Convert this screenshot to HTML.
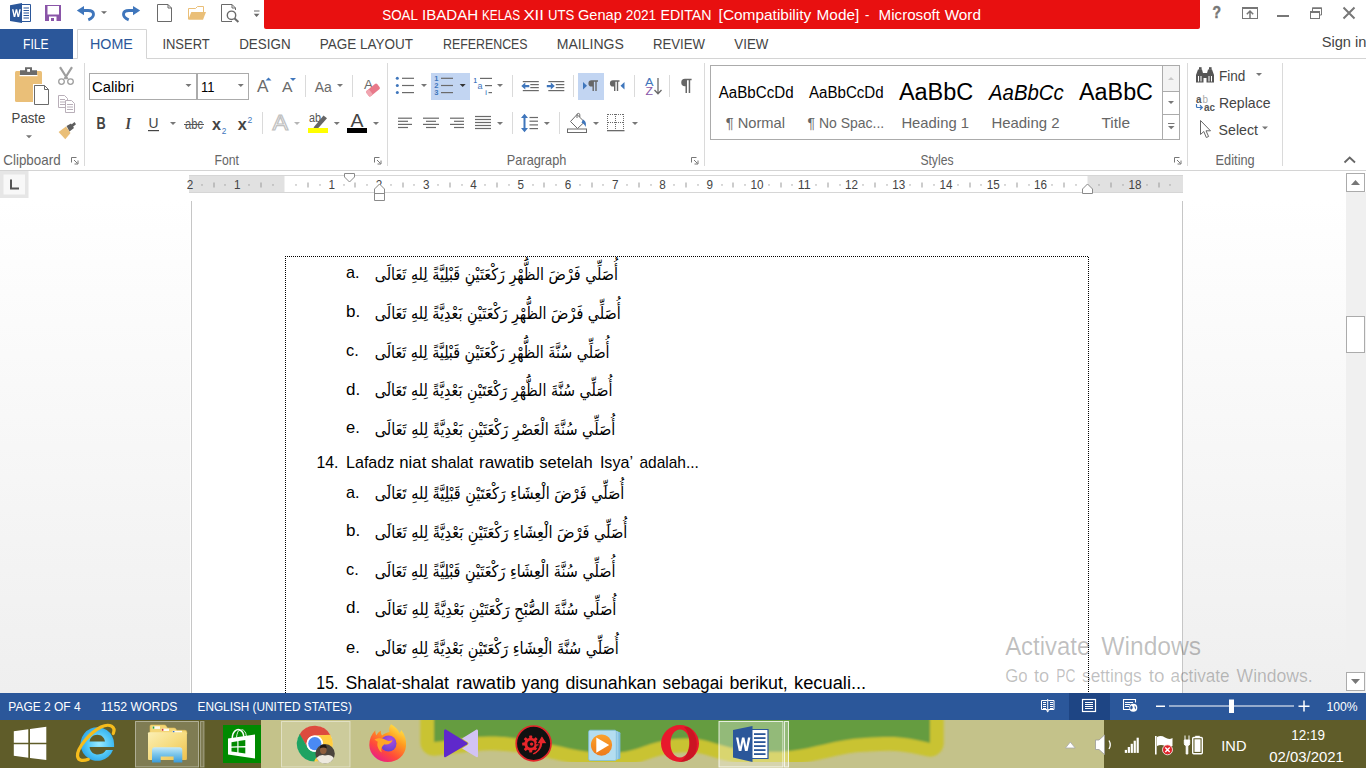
<!DOCTYPE html>
<html><head><meta charset="utf-8"><title>Word</title>
<style>
html,body{margin:0;padding:0;background:#fff;overflow:hidden}
#app{position:relative;width:1366px;height:768px;overflow:hidden;font-family:"Liberation Sans", "DejaVu Sans", sans-serif}
svg text{font-family:"Liberation Sans", "DejaVu Sans", sans-serif;white-space:pre}
</style></head><body><div id="app">
<svg width="1366" height="768" viewBox="0 0 1366 768" style="position:absolute;left:0;top:0">
<rect x="0" y="0" width="1366" height="768" fill="#fff" />
<path d="M264 0H1200V27Q1200 29 1198 29H266Q264 29 264 27Z" fill="#E81010"/>
<rect x="0" y="29" width="73" height="30" fill="#2B579A" />
<path d="M73 58.5H77.5V29.5H146.5V58.5H1366" fill="none" stroke="#D4D4D4" stroke-width="1"/>
<rect x="0" y="170" width="1366" height="1" fill="#D4D4D4" />
<path d="M22 4.5H30.5V21.5H22" fill="#fff" stroke="#2B579A"/>
<rect x="23.5" y="7.5" width="5.5" height="1" fill="#2B579A" />
<rect x="23.5" y="10.0" width="5.5" height="1" fill="#2B579A" />
<rect x="23.5" y="12.5" width="5.5" height="1" fill="#2B579A" />
<rect x="23.5" y="15.0" width="5.5" height="1" fill="#2B579A" />
<rect x="23.5" y="17.5" width="5.5" height="1" fill="#2B579A" />
<path d="M10 5.2L22 3V23L10 20.9Z" fill="#2B579A"/>
<path d="M12 9.2L13.7 17H15.3L16.4 11.9L17.5 17H19.1L20.8 9.2H19.3L18.3 14.6L17.2 9.2H15.7L14.5 14.6L13.5 9.2Z" fill="#fff"/>
<path d="M45 5H61V21H45Z" fill="#8A55A8"/>
<rect x="47.5" y="6" width="11.5" height="8.5" fill="#fff" />
<rect x="49" y="16.5" width="7.5" height="4.5" fill="#fff" />
<rect x="51" y="18" width="3" height="3" fill="#8A55A8" />
<path d="M76.8 10.6L84 5.9V15.3Z" fill="#3F76BC"/><path d="M83.5 10.5H88C95 10.5 95.5 17 88.3 19.8" fill="none" stroke="#3F76BC" stroke-width="2.9"/>
<path d="M101 11.2H107L104 14Z" fill="#6A6A6A"/>
<path d="M140.2 10.6L133 5.9V15.3Z" fill="#3F76BC"/><path d="M133.5 10.5H129C122 10.5 121.5 17 128.7 19.8" fill="none" stroke="#3F76BC" stroke-width="2.9"/>
<path d="M157.5 4.5H168L171.5 8V21.5H157.5Z M168 4.5V8H171.5" fill="#fff" stroke="#6A6A6A"/>
<path d="M188.5 19V8.5H195.5L197.5 6.5H203.5V12" fill="none" stroke="#EABF78"/>
<path d="M191.3 12H206L203 19.8H188.2Z" fill="#EABF78"/>
<path d="M232 21.5H221.5V4.5H232L235.5 8V10 M232 4.5V8H235.5" fill="none" stroke="#6A6A6A"/>
<circle cx="231.5" cy="15.3" r="4.2" fill="#fff" stroke="#6A6A6A" stroke-width="1.4"/>
<path d="M234.6 18.6L238.4 22" stroke="#6A6A6A" stroke-width="2" />
<rect x="254" y="10.5" width="5.5" height="1" fill="#6A6A6A" />
<path d="M253.7 13.8H259.5L256.6 17Z" fill="#6A6A6A"/>
<text x="1212.5" y="18.4" font-size="16.5" fill="#777" textLength="8.5" lengthAdjust="spacingAndGlyphs" font-weight="bold" stroke="#777" stroke-width="0.5">?</text>
<rect x="1242.5" y="7.5" width="15" height="11" fill="none" stroke="#777"/>
<rect x="1242" y="7" width="16" height="2" fill="#777" />
<path d="M1250 18V11.5M1246.8 14.2L1250 11L1253.2 14.2" fill="none" stroke="#777" stroke-width="1.5"/>
<rect x="1277" y="15" width="12" height="2" fill="#777" />
<path d="M1312.5 11V8H1321.5V15H1319" fill="none" stroke="#777"/>
<rect x="1312" y="7.5" width="10" height="1.5" fill="#777" />
<rect x="1310.5" y="11.5" width="9" height="7" fill="#fff" stroke="#777"/>
<rect x="1310" y="11" width="10" height="2" fill="#777" />
<path d="M1343.5 7.5L1354.5 18.5M1354.5 7.5L1343.5 18.5" stroke="#777" stroke-width="2"/>
<text x="382.2" y="20" font-size="15.3" fill="#fff" textLength="35.8" lengthAdjust="spacingAndGlyphs" >SOAL</text>
<text x="422" y="20" font-size="15.3" fill="#fff" textLength="56.2" lengthAdjust="spacingAndGlyphs" >IBADAH</text>
<text x="482" y="20" font-size="15.3" fill="#fff" textLength="38" lengthAdjust="spacingAndGlyphs" >KELAS</text>
<text x="523.4" y="20" font-size="15.3" fill="#fff" textLength="20.4" lengthAdjust="spacingAndGlyphs" >XII</text>
<text x="548" y="20" font-size="15.3" fill="#fff" textLength="26.3" lengthAdjust="spacingAndGlyphs" >UTS</text>
<text x="578" y="20" font-size="15.3" fill="#fff" textLength="43.8" lengthAdjust="spacingAndGlyphs" >Genap</text>
<text x="625.8" y="20" font-size="15.3" fill="#fff" textLength="30.4" lengthAdjust="spacingAndGlyphs" >2021</text>
<text x="660.5" y="20" font-size="15.3" fill="#fff" textLength="51.1" lengthAdjust="spacingAndGlyphs" >EDITAN</text>
<text x="718.6" y="20" font-size="15.3" fill="#fff" textLength="92.6" lengthAdjust="spacingAndGlyphs" >[Compatibility</text>
<text x="816.6" y="20" font-size="15.3" fill="#fff" textLength="42.6" lengthAdjust="spacingAndGlyphs" >Mode]</text>
<text x="865" y="20" font-size="15.3" fill="#fff" textLength="4.3" lengthAdjust="spacingAndGlyphs" >-</text>
<text x="878.6" y="20" font-size="15.3" fill="#fff" textLength="61.4" lengthAdjust="spacingAndGlyphs" >Microsoft</text>
<text x="944.7" y="20" font-size="15.3" fill="#fff" textLength="36.3" lengthAdjust="spacingAndGlyphs" >Word</text>
<text x="23" y="48.9" font-size="15.5" fill="#fff" textLength="25.6" lengthAdjust="spacingAndGlyphs" >FILE</text>
<text x="90" y="48.9" font-size="15.5" fill="#2B579A" textLength="42.8" lengthAdjust="spacingAndGlyphs" >HOME</text>
<text x="162.4" y="48.9" font-size="15.5" fill="#444" textLength="47.3" lengthAdjust="spacingAndGlyphs" >INSERT</text>
<text x="239.2" y="48.9" font-size="15.5" fill="#444" textLength="51.4" lengthAdjust="spacingAndGlyphs" >DESIGN</text>
<text x="319.8" y="48.9" font-size="15.5" fill="#444" textLength="93.2" lengthAdjust="spacingAndGlyphs" >PAGE LAYOUT</text>
<text x="443" y="48.9" font-size="15.5" fill="#444" textLength="84.6" lengthAdjust="spacingAndGlyphs" >REFERENCES</text>
<text x="556.8" y="48.9" font-size="15.5" fill="#444" textLength="67.1" lengthAdjust="spacingAndGlyphs" >MAILINGS</text>
<text x="653" y="48.9" font-size="15.5" fill="#444" textLength="52" lengthAdjust="spacingAndGlyphs" >REVIEW</text>
<text x="734.3" y="48.9" font-size="15.5" fill="#444" textLength="34.1" lengthAdjust="spacingAndGlyphs" >VIEW</text>
<text x="1321.7" y="47" font-size="15.5" fill="#444" textLength="44.8" lengthAdjust="spacingAndGlyphs" >Sign in</text>
<rect x="84.0" y="63" width="1" height="103" fill="#DADADA" />
<rect x="387.0" y="63" width="1" height="103" fill="#DADADA" />
<rect x="704.0" y="63" width="1" height="103" fill="#DADADA" />
<rect x="1187.0" y="63" width="1" height="103" fill="#DADADA" />
<rect x="1282.0" y="63" width="1" height="103" fill="#DADADA" />
<text x="3.3" y="165" font-size="14.5" fill="#666" textLength="57.3" lengthAdjust="spacingAndGlyphs" >Clipboard</text>
<text x="214.5" y="165" font-size="14.5" fill="#666" textLength="24.5" lengthAdjust="spacingAndGlyphs" >Font</text>
<text x="506.8" y="165" font-size="14.5" fill="#666" textLength="59.6" lengthAdjust="spacingAndGlyphs" >Paragraph</text>
<text x="920.4" y="165" font-size="14.5" fill="#666" textLength="33.1" lengthAdjust="spacingAndGlyphs" >Styles</text>
<text x="1215.6" y="165" font-size="14.5" fill="#666" textLength="39.1" lengthAdjust="spacingAndGlyphs" >Editing</text>
<text x="11.6" y="122.6" font-size="15" fill="#444" textLength="33.7" lengthAdjust="spacingAndGlyphs" >Paste</text>
<rect x="89.5" y="73.5" width="107" height="26" fill="#fff" stroke="#ABABAB"/>
<rect x="197.5" y="73.5" width="51" height="26" fill="#fff" stroke="#ABABAB"/>
<text x="92" y="92" font-size="15.5" fill="#000" textLength="42" lengthAdjust="spacingAndGlyphs" >Calibri</text>
<text x="201" y="92" font-size="15.5" fill="#000" textLength="13.5" lengthAdjust="spacingAndGlyphs" >11</text>
<text x="1218.9" y="81" font-size="15" fill="#444" textLength="26.4" lengthAdjust="spacingAndGlyphs" >Find</text>
<text x="1218.9" y="108.2" font-size="15" fill="#444" textLength="51.6" lengthAdjust="spacingAndGlyphs" >Replace</text>
<text x="1218.6" y="134.9" font-size="15" fill="#444" textLength="39.4" lengthAdjust="spacingAndGlyphs" >Select</text>
<rect x="710.5" y="65.5" width="469" height="74" fill="#fff" stroke="#ABABAB"/>
<rect x="1162" y="66" width="1" height="73" fill="#ABABAB" />
<rect x="1163" y="66" width="16" height="25" fill="#F3F3F3" />
<rect x="1163" y="91" width="16" height="1" fill="#ABABAB" />
<rect x="1163" y="114" width="16" height="1" fill="#ABABAB" />
<text x="718.7" y="98" font-size="15.8" fill="#000" textLength="74.9" lengthAdjust="spacingAndGlyphs" >AaBbCcDd</text>
<text x="808.9" y="98" font-size="15.8" fill="#000" textLength="74.8" lengthAdjust="spacingAndGlyphs" >AaBbCcDd</text>
<text x="898.9" y="100.3" font-size="23.3" fill="#000" textLength="74.4" lengthAdjust="spacingAndGlyphs" >AaBbC</text>
<text x="989" y="99.5" font-size="22" fill="#000" textLength="74.7" lengthAdjust="spacingAndGlyphs" font-style="italic" >AaBbCc</text>
<text x="1079" y="100.3" font-size="23.3" fill="#000" textLength="74" lengthAdjust="spacingAndGlyphs" >AaBbC</text>
<text x="725.7" y="128" font-size="15" fill="#666" textLength="59.3" lengthAdjust="spacingAndGlyphs" >¶ Normal</text>
<text x="807.5" y="128" font-size="15" fill="#666" textLength="76.7" lengthAdjust="spacingAndGlyphs" >¶ No Spac...</text>
<text x="901.4" y="128" font-size="15" fill="#666" textLength="67.6" lengthAdjust="spacingAndGlyphs" >Heading 1</text>
<text x="991.4" y="128" font-size="15" fill="#666" textLength="68.1" lengthAdjust="spacingAndGlyphs" >Heading 2</text>
<text x="1101.4" y="128" font-size="15" fill="#666" textLength="28.6" lengthAdjust="spacingAndGlyphs" >Title</text>
<rect x="15" y="71" width="27" height="31" rx="1.5" fill="#EABF78"/>
<rect x="19.5" y="75" width="18" height="1.2" fill="#fff" />
<path d="M20 70.2H25V67.2H32V70.2H37V75H20Z" fill="#6A6A6A"/>
<rect x="27.2" y="69" width="2.8" height="2.8" fill="#fff" />
<path d="M34.5 85.5H44.5L48.5 89.5V104.5H34.5Z" fill="#fff" stroke="#6A6A6A" stroke-width="1"/>
<path d="M44.5 85.5V89.5H48.5" fill="none" stroke="#6A6A6A"/>
<rect x="33" y="84" width="1" height="21.5" fill="#fff" />
<rect x="33" y="84" width="10" height="1" fill="#fff" />
<path d="M26 135.2H32L29 138.2Z" fill="#777"/>
<path d="M60 67.2L67.5 79M72 67.2L64.5 79" stroke="#9E9E9E" stroke-width="2.2" fill="none"/>
<circle cx="61.5" cy="81.6" r="2.8" fill="#fff" stroke="#9E9E9E" stroke-width="1.3"/><circle cx="70.5" cy="81.6" r="2.8" fill="#fff" stroke="#9E9E9E" stroke-width="1.3"/>
<path d="M58.5 95.5H64.5L67.5 98.5V107.5H58.5Z" fill="#fff" stroke="#B9AFB9"/>
<rect x="60" y="99" width="5" height="1" fill="#B9AFB9" />
<rect x="60" y="101.5" width="5" height="1" fill="#B9AFB9" />
<rect x="60" y="104" width="5" height="1" fill="#B9AFB9" />
<path d="M65.5 100.5H71.5L74.5 103.5V112.5H65.5Z" fill="#fff" stroke="#B9AFB9"/>
<rect x="67" y="104" width="6" height="1" fill="#B9AFB9" />
<rect x="67" y="106.5" width="6" height="1" fill="#B9AFB9" />
<rect x="67" y="109" width="6" height="1" fill="#B9AFB9" />
<path d="M58.6 132L66 126.5L70.5 133L65.3 139.2Z" fill="#EABF78"/>
<path d="M66.5 126L71 123.5L74 128L69.5 131.5Z M71.5 124.5L74.5 122L76 124.2L73 126.8Z" fill="#5E5E5E"/>
<path d="M71.5 162.5V157.5H76.5" fill="none" stroke="#777"/>
<path d="M74 160L77.5 163.5M74.5 164H78V160.5" fill="none" stroke="#777"/>
<path d="M374.5 162.5V157.5H379.5" fill="none" stroke="#777"/>
<path d="M377 160L380.5 163.5M377.5 164H381V160.5" fill="none" stroke="#777"/>
<path d="M691.5 162.5V157.5H696.5" fill="none" stroke="#777"/>
<path d="M694 160L697.5 163.5M694.5 164H698V160.5" fill="none" stroke="#777"/>
<path d="M1174.5 162.5V157.5H1179.5" fill="none" stroke="#777"/>
<path d="M1177 160L1180.5 163.5M1177.5 164H1181V160.5" fill="none" stroke="#777"/>
<path d="M185.5 84H191.5L188.5 87Z" fill="#777"/>
<path d="M237.8 84H243.8L240.8 87Z" fill="#777"/>
<text x="257" y="92" font-size="16.8" fill="#6A6A6A" textLength="11.5" lengthAdjust="spacingAndGlyphs" >A</text>
<path d="M265.5 80.5L268.5 77.5L271.5 80.5Z" fill="#3F76BC"/>
<text x="282" y="92" font-size="15.5" fill="#6A6A6A" textLength="10.5" lengthAdjust="spacingAndGlyphs" >A</text>
<path d="M290 78H296L293 81Z" fill="#3F76BC"/>
<rect x="305" y="75" width="1" height="22" fill="#DADADA" />
<rect x="352" y="75" width="1" height="22" fill="#DADADA" />
<text x="314.7" y="92" font-size="15.5" fill="#6A6A6A" textLength="17.1" lengthAdjust="spacingAndGlyphs" >Aa</text>
<path d="M337 84H343L340 87Z" fill="#777"/>
<text x="364" y="89" font-size="13.5" fill="#6A6A6A" textLength="9" lengthAdjust="spacingAndGlyphs" >A</text>
<g transform="rotate(-40 373 90)"><rect x="366" y="86.6" width="14" height="6.8" rx="1.6" fill="#E8798A"/><rect x="366" y="86.6" width="4.2" height="6.8" rx="1.2" fill="#F0A5B0"/></g>
<text x="96.5" y="128.5" font-size="16" fill="#444" textLength="9.2" lengthAdjust="spacingAndGlyphs" font-weight="bold" >B</text>
<text x="125.5" y="128.5" font-size="16" fill="#444" textLength="5.5" lengthAdjust="spacingAndGlyphs" font-weight="bold" font-style="italic" style='font-family:"Liberation Serif", "DejaVu Serif", serif' >I</text>
<text x="148.5" y="128" font-size="15.5" fill="#444" textLength="10.0" lengthAdjust="spacingAndGlyphs" >U</text>
<rect x="148" y="130" width="11" height="1.2" fill="#444" />
<path d="M170 122H176L173 125Z" fill="#777"/>
<text x="185" y="128.5" font-size="14" fill="#555" textLength="18" lengthAdjust="spacingAndGlyphs" >abc</text>
<rect x="184" y="124" width="20" height="1" fill="#555" />
<text x="212" y="130" font-size="16.5" fill="#444" textLength="9" lengthAdjust="spacingAndGlyphs" font-weight="bold" >x</text>
<text x="221.8" y="133.5" font-size="9" fill="#3F76BC" textLength="4.6" lengthAdjust="spacingAndGlyphs" >2</text>
<text x="237.8" y="130" font-size="16.5" fill="#444" textLength="9.0" lengthAdjust="spacingAndGlyphs" font-weight="bold" >x</text>
<text x="247.6" y="123" font-size="9" fill="#3F76BC" textLength="4.8" lengthAdjust="spacingAndGlyphs" >2</text>
<rect x="262" y="112" width="1" height="22" fill="#DADADA" />
<text x="272.4" y="130" font-size="22" fill="#fff" stroke="#C0C0C0" stroke-width="1.2" textLength="15.6" lengthAdjust="spacingAndGlyphs">A</text>
<path d="M294 122H300L297 125Z" fill="#B5B5B5"/>
<text x="309" y="121.5" font-size="12" fill="#555" textLength="12" lengthAdjust="spacingAndGlyphs" >ab</text>
<path d="M313.5 127.5L323.5 115.5L327 118.2L317 129.5Z" fill="#666"/>
<rect x="308" y="128" width="20" height="5" fill="#FFFF00" />
<path d="M333.8 122H339.8L336.8 125Z" fill="#777"/>
<text x="350.5" y="126.8" font-size="17.8" fill="#444" textLength="13.0" lengthAdjust="spacingAndGlyphs" >A</text>
<rect x="347" y="128" width="20" height="5" fill="#000" />
<path d="M373 122H379L376 125Z" fill="#777"/>
<circle cx="397.3" cy="78.3" r="1.5" fill="#3F76BC"/>
<rect x="402" y="77.7" width="12" height="1.2" fill="#6A6A6A" />
<circle cx="397.3" cy="85.5" r="1.5" fill="#3F76BC"/>
<rect x="402" y="84.9" width="12" height="1.2" fill="#6A6A6A" />
<circle cx="397.3" cy="92.6" r="1.5" fill="#3F76BC"/>
<rect x="402" y="92.0" width="12" height="1.2" fill="#6A6A6A" />
<path d="M421 84H427L424 87Z" fill="#777"/>
<rect x="431" y="73" width="39" height="27" fill="#C2D5F2" />
<text x="434.3" y="80.89999999999999" font-size="7.5" fill="#3F76BC" textLength="4.2" lengthAdjust="spacingAndGlyphs" font-weight="bold" >1</text>
<rect x="441" y="77.7" width="12" height="1.2" fill="#6A6A6A" />
<text x="434.3" y="88.1" font-size="7.5" fill="#3F76BC" textLength="4.2" lengthAdjust="spacingAndGlyphs" font-weight="bold" >2</text>
<rect x="441" y="84.9" width="12" height="1.2" fill="#6A6A6A" />
<text x="434.3" y="95.19999999999999" font-size="7.5" fill="#3F76BC" textLength="4.2" lengthAdjust="spacingAndGlyphs" font-weight="bold" >3</text>
<rect x="441" y="92.0" width="12" height="1.2" fill="#6A6A6A" />
<path d="M459.7 84H465.7L462.7 87Z" fill="#333"/>
<text x="473.6" y="82.5" font-size="8" fill="#3F76BC" textLength="3.4" lengthAdjust="spacingAndGlyphs" font-weight="bold" >1</text>
<rect x="480" y="77.8" width="12" height="1.2" fill="#6A6A6A" />
<text x="477.5" y="88.5" font-size="9" fill="#3F76BC" textLength="5.0" lengthAdjust="spacingAndGlyphs" >a</text>
<rect x="485" y="85" width="7" height="1.2" fill="#6A6A6A" />
<text x="485.2" y="95" font-size="8" fill="#3F76BC" textLength="1.6" lengthAdjust="spacingAndGlyphs" font-weight="bold" >i</text>
<rect x="488.5" y="92" width="3.5" height="1.2" fill="#6A6A6A" />
<path d="M497 84H503L500 87Z" fill="#777"/>
<rect x="512" y="75" width="1" height="22" fill="#DADADA" />
<rect x="573" y="75" width="1" height="22" fill="#DADADA" />
<rect x="634" y="75" width="1" height="22" fill="#DADADA" />
<rect x="669" y="75" width="1" height="22" fill="#DADADA" />
<rect x="522.8" y="81" width="16" height="1.2" fill="#6A6A6A" />
<rect x="522.8" y="90" width="16" height="1.2" fill="#6A6A6A" />
<rect x="530.3" y="84" width="8.5" height="1.2" fill="#6A6A6A" />
<rect x="530.3" y="87" width="8.5" height="1.2" fill="#6A6A6A" />
<path d="M521.3 86.1L525.3 82.6V84.9H529.3V87.3H525.3V89.6Z" fill="#3F76BC"/>
<rect x="548.3" y="81" width="16" height="1.2" fill="#6A6A6A" />
<rect x="548.3" y="90" width="16" height="1.2" fill="#6A6A6A" />
<rect x="555.8" y="84" width="8.5" height="1.2" fill="#6A6A6A" />
<rect x="555.8" y="87" width="8.5" height="1.2" fill="#6A6A6A" />
<path d="M554.8 86.1L550.8 82.6V84.9H546.8V87.3H550.8V89.6Z" fill="#3F76BC"/>
<rect x="578" y="73" width="26" height="27" fill="#C2D5F2" />
<path d="M583 82L587 85.7L583 89.4Z" fill="#3F76BC"/>
<path d="M591.5 80.3H598.0V81.7H596.7V91.0H595.3V81.7H593.9V91.0H592.5V86.5H591.5A3.1 3.1 0 0 1 591.5 80.3Z" fill="#666"/>
<path d="M613 80.3H619.5V81.7H618.2V91.0H616.8V81.7H615.4V91.0H614V86.5H613A3.1 3.1 0 0 1 613 80.3Z" fill="#666"/>
<path d="M624.5 82L620.5 85.7L624.5 89.4Z" fill="#3F76BC"/>
<text x="645" y="85.5" font-size="11.5" fill="#3F76BC" textLength="8.5" lengthAdjust="spacingAndGlyphs" >A</text>
<text x="645.5" y="95" font-size="11" fill="#8A55A8" textLength="7.5" lengthAdjust="spacingAndGlyphs" >Z</text>
<path d="M658 78V93.5M654.5 90L658 93.8L661.5 90" fill="none" stroke="#6A6A6A" stroke-width="1.3"/>
<path d="M685 78.8H691.6V80.3H690.2V93H688.7V80.3H687V93H685.5V86.3H685A3.75 3.75 0 0 1 685 78.8Z" fill="#666"/>
<rect x="398" y="117.60000000000001" width="14" height="1.2" fill="#6A6A6A" />
<rect x="398" y="120.7" width="10" height="1.2" fill="#6A6A6A" />
<rect x="398" y="123.80000000000001" width="14" height="1.2" fill="#6A6A6A" />
<rect x="398" y="126.9" width="10" height="1.2" fill="#6A6A6A" />
<rect x="423.0" y="117.60000000000001" width="16" height="1.2" fill="#6A6A6A" />
<rect x="426.0" y="120.7" width="10" height="1.2" fill="#6A6A6A" />
<rect x="423.0" y="123.80000000000001" width="16" height="1.2" fill="#6A6A6A" />
<rect x="426.0" y="126.9" width="10" height="1.2" fill="#6A6A6A" />
<rect x="450" y="117.60000000000001" width="14" height="1.2" fill="#6A6A6A" />
<rect x="454" y="120.7" width="10" height="1.2" fill="#6A6A6A" />
<rect x="450" y="123.80000000000001" width="14" height="1.2" fill="#6A6A6A" />
<rect x="454" y="126.9" width="10" height="1.2" fill="#6A6A6A" />
<rect x="475" y="115.9" width="16" height="1.2" fill="#6A6A6A" />
<rect x="475" y="118.9" width="16" height="1.2" fill="#6A6A6A" />
<rect x="475" y="121.9" width="16" height="1.2" fill="#6A6A6A" />
<rect x="475" y="124.9" width="16" height="1.2" fill="#6A6A6A" />
<rect x="475" y="127.9" width="16" height="1.2" fill="#6A6A6A" />
<path d="M497 122H503L500 125Z" fill="#777"/>
<rect x="512" y="112" width="1" height="22" fill="#DADADA" />
<rect x="559" y="112" width="1" height="22" fill="#DADADA" />
<path d="M524.5 113.7L521 118H523.5V128H521L524.5 132.2L528 128H525.5V118H528Z" fill="#3F76BC"/>
<rect x="529.5" y="116.9" width="8.5" height="1.2" fill="#6A6A6A" />
<rect x="529.5" y="120.60000000000001" width="8.5" height="1.2" fill="#6A6A6A" />
<rect x="529.5" y="124.30000000000001" width="8.5" height="1.2" fill="#6A6A6A" />
<rect x="529.5" y="128.0" width="8.5" height="1.2" fill="#6A6A6A" />
<path d="M543.9 122H549.9L546.9 125Z" fill="#777"/>
<rect x="567.5" y="129" width="19" height="3.5" fill="#fff" stroke="#6A6A6A"/>
<path d="M577 114.5L584.5 122L577.5 128.5L570.5 121.5Z" fill="#fff" stroke="#6A6A6A"/>
<path d="M577 118V114.8A1.4 1.4 0 0 1 579.8 114.8V117" fill="none" stroke="#6A6A6A"/>
<path d="M583 119.5C586 121 586.5 124 585.5 127C584.5 124.5 583.5 123.5 581.5 122.8Z" fill="#3F76BC"/>
<path d="M593 122H599L596 125Z" fill="#777"/>
<path d="M607.5 114V130M615.5 114V130M623.5 114V130M607.5 114.5H624M607.5 122.5H624" fill="none" stroke="#6A6A6A" stroke-dasharray="1 1" shape-rendering="crispEdges"/>
<rect x="607" y="130" width="17.5" height="1.3" fill="#6A6A6A" />
<path d="M632 122H638L635 125Z" fill="#777"/>
<path d="M1168 80L1171 77L1174 80Z" fill="#C8C8C8"/>
<path d="M1168 101H1174L1171 104Z" fill="#777"/>
<rect x="1168" y="123" width="6.5" height="1" fill="#777" />
<path d="M1168 126H1174.5L1171.2 129.3Z" fill="#777"/>
<path d="M1196 82.5V75L1198 69.5H1202L1203.5 75V82.5Z M1206.5 82.5V75L1208 69.5H1212L1214 75V82.5Z" fill="#555"/>
<rect x="1199" y="67.2" width="2.6" height="2.6" fill="#555" />
<rect x="1209" y="67.2" width="2.6" height="2.6" fill="#555" />
<rect x="1203" y="73" width="4" height="5" fill="#555" />
<rect x="1198" y="76" width="1" height="5.5" fill="#fff" />
<rect x="1200.5" y="76" width="1" height="5.5" fill="#fff" />
<rect x="1208.5" y="76" width="1" height="5.5" fill="#fff" />
<rect x="1211" y="76" width="1" height="5.5" fill="#fff" />
<path d="M1256 73H1262L1259 76Z" fill="#777"/>
<text x="1196" y="102.5" font-size="10.5" fill="#555" textLength="5.5" lengthAdjust="spacingAndGlyphs" font-weight="bold" >a</text>
<text x="1202.5" y="102.5" font-size="10.5" fill="#AAA" textLength="5.5" lengthAdjust="spacingAndGlyphs" >b</text>
<text x="1204" y="110.5" font-size="10.5" fill="#555" textLength="11" lengthAdjust="spacingAndGlyphs" font-weight="bold" >ac</text>
<path d="M1196.5 104V106.5Q1196.5 107.5 1197.5 107.5H1202M1200 105.3L1202.3 107.5L1200 109.7" fill="none" stroke="#3F76BC" stroke-width="1.2"/>
<path d="M1200.5 120.5V134.5L1203.8 131.5L1206.3 137.5L1208.6 136.5L1206 130.8H1210.5Z" fill="#fff" stroke="#666" stroke-width="1"/>
<path d="M1262 126.5H1268L1265 129.5Z" fill="#777"/>
<path d="M1344.5 162.5L1349.7 157.5L1355 162.5" fill="none" stroke="#666" stroke-width="1.8"/>
<defs><linearGradient id="bgg" x1="0" y1="0" x2="0" y2="1"><stop offset="0" stop-color="#ffffff"/><stop offset="1" stop-color="#EFEFEF"/></linearGradient></defs>
<rect x="0" y="200" width="1346" height="493" fill="url(#bgg)" />
<rect x="0" y="171" width="28.5" height="27" fill="#E6E6E6" />
<rect x="3.5" y="174.5" width="21.5" height="20" fill="#F8F8F8" />
<path d="M11 179.5V188.5H19" fill="none" stroke="#555" stroke-width="2"/>
<rect x="189" y="175" width="994" height="18" fill="#E1E1E1" />
<rect x="284.5" y="175" width="803" height="18" fill="#fff" />
<rect x="189" y="175" width="994" height="1" fill="#D6D6D6" />
<rect x="189" y="192" width="994" height="1" fill="#D6D6D6" />
<text x="186.8" y="188.5" font-size="12.5" fill="#444" textLength="6.5" lengthAdjust="spacingAndGlyphs" >2</text>
<rect x="201.5" y="184.2" width="1" height="1.5" fill="#9A9A9A" />
<rect x="213.5" y="182.5" width="1" height="5" fill="#9A9A9A" />
<rect x="224.5" y="184.2" width="1" height="1.5" fill="#9A9A9A" />
<text x="234.0" y="188.5" font-size="12.5" fill="#444" textLength="6.5" lengthAdjust="spacingAndGlyphs" >1</text>
<rect x="248.5" y="184.2" width="1" height="1.5" fill="#9A9A9A" />
<rect x="260.5" y="182.5" width="1" height="5" fill="#9A9A9A" />
<rect x="272.5" y="184.2" width="1" height="1.5" fill="#9A9A9A" />
<rect x="295.5" y="184.2" width="1" height="1.5" fill="#9A9A9A" />
<rect x="307.5" y="182.5" width="1" height="5" fill="#9A9A9A" />
<rect x="319.5" y="184.2" width="1" height="1.5" fill="#9A9A9A" />
<text x="328.5" y="188.5" font-size="12.5" fill="#444" textLength="6.5" lengthAdjust="spacingAndGlyphs" >1</text>
<rect x="343.5" y="184.2" width="1" height="1.5" fill="#9A9A9A" />
<rect x="354.5" y="182.5" width="1" height="5" fill="#9A9A9A" />
<rect x="366.5" y="184.2" width="1" height="1.5" fill="#9A9A9A" />
<text x="375.7" y="188.5" font-size="12.5" fill="#444" textLength="6.5" lengthAdjust="spacingAndGlyphs" >2</text>
<rect x="390.5" y="184.2" width="1" height="1.5" fill="#9A9A9A" />
<rect x="402.5" y="182.5" width="1" height="5" fill="#9A9A9A" />
<rect x="413.5" y="184.2" width="1" height="1.5" fill="#9A9A9A" />
<text x="423.0" y="188.5" font-size="12.5" fill="#444" textLength="6.5" lengthAdjust="spacingAndGlyphs" >3</text>
<rect x="437.5" y="184.2" width="1" height="1.5" fill="#9A9A9A" />
<rect x="449.5" y="182.5" width="1" height="5" fill="#9A9A9A" />
<rect x="461.5" y="184.2" width="1" height="1.5" fill="#9A9A9A" />
<text x="470.2" y="188.5" font-size="12.5" fill="#444" textLength="6.5" lengthAdjust="spacingAndGlyphs" >4</text>
<rect x="484.5" y="184.2" width="1" height="1.5" fill="#9A9A9A" />
<rect x="496.5" y="182.5" width="1" height="5" fill="#9A9A9A" />
<rect x="508.5" y="184.2" width="1" height="1.5" fill="#9A9A9A" />
<text x="517.5" y="188.5" font-size="12.5" fill="#444" textLength="6.5" lengthAdjust="spacingAndGlyphs" >5</text>
<rect x="532.5" y="184.2" width="1" height="1.5" fill="#9A9A9A" />
<rect x="543.5" y="182.5" width="1" height="5" fill="#9A9A9A" />
<rect x="555.5" y="184.2" width="1" height="1.5" fill="#9A9A9A" />
<text x="564.7" y="188.5" font-size="12.5" fill="#444" textLength="6.5" lengthAdjust="spacingAndGlyphs" >6</text>
<rect x="579.5" y="184.2" width="1" height="1.5" fill="#9A9A9A" />
<rect x="591.5" y="182.5" width="1" height="5" fill="#9A9A9A" />
<rect x="602.5" y="184.2" width="1" height="1.5" fill="#9A9A9A" />
<text x="612.0" y="188.5" font-size="12.5" fill="#444" textLength="6.5" lengthAdjust="spacingAndGlyphs" >7</text>
<rect x="626.5" y="184.2" width="1" height="1.5" fill="#9A9A9A" />
<rect x="638.5" y="182.5" width="1" height="5" fill="#9A9A9A" />
<rect x="650.5" y="184.2" width="1" height="1.5" fill="#9A9A9A" />
<text x="659.2" y="188.5" font-size="12.5" fill="#444" textLength="6.5" lengthAdjust="spacingAndGlyphs" >8</text>
<rect x="673.5" y="184.2" width="1" height="1.5" fill="#9A9A9A" />
<rect x="685.5" y="182.5" width="1" height="5" fill="#9A9A9A" />
<rect x="697.5" y="184.2" width="1" height="1.5" fill="#9A9A9A" />
<text x="706.4" y="188.5" font-size="12.5" fill="#444" textLength="6.5" lengthAdjust="spacingAndGlyphs" >9</text>
<rect x="721.5" y="184.2" width="1" height="1.5" fill="#9A9A9A" />
<rect x="732.5" y="182.5" width="1" height="5" fill="#9A9A9A" />
<rect x="744.5" y="184.2" width="1" height="1.5" fill="#9A9A9A" />
<text x="750.4" y="188.5" font-size="12.5" fill="#444" textLength="13.0" lengthAdjust="spacingAndGlyphs" >10</text>
<rect x="768.5" y="184.2" width="1" height="1.5" fill="#9A9A9A" />
<rect x="780.5" y="182.5" width="1" height="5" fill="#9A9A9A" />
<rect x="791.5" y="184.2" width="1" height="1.5" fill="#9A9A9A" />
<text x="797.7" y="188.5" font-size="12.5" fill="#444" textLength="13.0" lengthAdjust="spacingAndGlyphs" >11</text>
<rect x="815.5" y="184.2" width="1" height="1.5" fill="#9A9A9A" />
<rect x="827.5" y="182.5" width="1" height="5" fill="#9A9A9A" />
<rect x="839.5" y="184.2" width="1" height="1.5" fill="#9A9A9A" />
<text x="844.9" y="188.5" font-size="12.5" fill="#444" textLength="13.0" lengthAdjust="spacingAndGlyphs" >12</text>
<rect x="862.5" y="184.2" width="1" height="1.5" fill="#9A9A9A" />
<rect x="874.5" y="182.5" width="1" height="5" fill="#9A9A9A" />
<rect x="886.5" y="184.2" width="1" height="1.5" fill="#9A9A9A" />
<text x="892.2" y="188.5" font-size="12.5" fill="#444" textLength="13.0" lengthAdjust="spacingAndGlyphs" >13</text>
<rect x="909.5" y="184.2" width="1" height="1.5" fill="#9A9A9A" />
<rect x="921.5" y="182.5" width="1" height="5" fill="#9A9A9A" />
<rect x="933.5" y="184.2" width="1" height="1.5" fill="#9A9A9A" />
<text x="939.4" y="188.5" font-size="12.5" fill="#444" textLength="13.0" lengthAdjust="spacingAndGlyphs" >14</text>
<rect x="957.5" y="184.2" width="1" height="1.5" fill="#9A9A9A" />
<rect x="969.5" y="182.5" width="1" height="5" fill="#9A9A9A" />
<rect x="980.5" y="184.2" width="1" height="1.5" fill="#9A9A9A" />
<text x="986.7" y="188.5" font-size="12.5" fill="#444" textLength="13.0" lengthAdjust="spacingAndGlyphs" >15</text>
<rect x="1004.5" y="184.2" width="1" height="1.5" fill="#9A9A9A" />
<rect x="1016.5" y="182.5" width="1" height="5" fill="#9A9A9A" />
<rect x="1028.5" y="184.2" width="1" height="1.5" fill="#9A9A9A" />
<text x="1033.9" y="188.5" font-size="12.5" fill="#444" textLength="13.0" lengthAdjust="spacingAndGlyphs" >16</text>
<rect x="1051.5" y="184.2" width="1" height="1.5" fill="#9A9A9A" />
<rect x="1063.5" y="182.5" width="1" height="5" fill="#9A9A9A" />
<rect x="1075.5" y="184.2" width="1" height="1.5" fill="#9A9A9A" />
<rect x="1098.5" y="184.2" width="1" height="1.5" fill="#9A9A9A" />
<rect x="1110.5" y="182.5" width="1" height="5" fill="#9A9A9A" />
<rect x="1122.5" y="184.2" width="1" height="1.5" fill="#9A9A9A" />
<text x="1128.4" y="188.5" font-size="12.5" fill="#444" textLength="13.0" lengthAdjust="spacingAndGlyphs" >18</text>
<rect x="1146.5" y="184.2" width="1" height="1.5" fill="#9A9A9A" />
<rect x="1158.5" y="182.5" width="1" height="5" fill="#9A9A9A" />
<rect x="1169.5" y="184.2" width="1" height="1.5" fill="#9A9A9A" />
<rect x="190" y="200" width="993" height="493" fill="#fff" />
<rect x="191" y="201" width="1" height="492" fill="#C6C6C6" />
<rect x="1182" y="201" width="1" height="492" fill="#C6C6C6" />
<path d="M285.5 693V256.5H1088.5V693" fill="none" stroke="#000" stroke-width="1" stroke-dasharray="1 1" shape-rendering="crispEdges"/>
<path d="M344.5 173.5H354.5V177L349.5 182L344.5 177Z" fill="#fff" stroke="#8A8A8A"/>
<path d="M374.5 200.5V189L379.5 184L384.5 189V200.5ZM374.5 193.5H384.5" fill="#fff" stroke="#8A8A8A"/>
<path d="M1082.5 193.5V189L1087.5 184L1092.5 189V193.5Z" fill="#fff" stroke="#8A8A8A"/>
<rect x="1346" y="171" width="20" height="522" fill="#F0F0F0" />
<rect x="1346" y="171" width="20" height="21" fill="#fff" />
<rect x="1346.5" y="173.5" width="18" height="18" fill="#fff" stroke="#ABABAB"/>
<path d="M1351 185L1355.5 180L1360 185Z" fill="#777"/>
<rect x="1346.5" y="672.5" width="18" height="18" fill="#fff" stroke="#ABABAB"/>
<path d="M1351 679L1355.5 684L1360 679Z" fill="#777"/>
<rect x="1346.5" y="316.5" width="18" height="36" fill="#fff" stroke="#ABABAB"/>
<text x="346" y="277.8" font-size="16.6" fill="#000" textLength="13.5" lengthAdjust="spacingAndGlyphs" >a.</text>
<text x="374.8" y="279.6" font-size="16.5" fill="#000" textLength="243.2" lengthAdjust="spacingAndGlyphs" style='font-family:"DejaVu Sans", sans-serif' >أُصَلِّي فَرْضَ الظُّهْرِ رَكْعَتَيْنِ قَبْلِيَّةً لِلهِ تَعَالَى</text>
<text x="346" y="497.5" font-size="16.6" fill="#000" textLength="13.5" lengthAdjust="spacingAndGlyphs" >a.</text>
<text x="374.8" y="499.3" font-size="16.5" fill="#000" textLength="249.4" lengthAdjust="spacingAndGlyphs" style='font-family:"DejaVu Sans", sans-serif' >أُصَلِّي فَرْضَ الْعِشَاءِ رَكْعَتَيْنِ قَبْلِيَّةً لِلهِ تَعَالَى</text>
<text x="346" y="316.8" font-size="16.6" fill="#000" textLength="14.2" lengthAdjust="spacingAndGlyphs" >b.</text>
<text x="374.8" y="318.6" font-size="16.5" fill="#000" textLength="245.9" lengthAdjust="spacingAndGlyphs" style='font-family:"DejaVu Sans", sans-serif' >أُصَلِّي فَرْضَ الظُّهْرِ رَكْعَتَيْنِ بَعْدِيَّةً لِلهِ تَعَالَى</text>
<text x="346" y="536.4" font-size="16.6" fill="#000" textLength="14.2" lengthAdjust="spacingAndGlyphs" >b.</text>
<text x="374.8" y="538.1999999999999" font-size="16.5" fill="#000" textLength="252.4" lengthAdjust="spacingAndGlyphs" style='font-family:"DejaVu Sans", sans-serif' >أُصَلِّي فَرْضَ الْعِشَاءِ رَكْعَتَيْنِ بَعْدِيَّةً لِلهِ تَعَالَى</text>
<text x="346" y="355.7" font-size="16.6" fill="#000" textLength="12.7" lengthAdjust="spacingAndGlyphs" >c.</text>
<text x="374.8" y="357.5" font-size="16.5" fill="#000" textLength="234.8" lengthAdjust="spacingAndGlyphs" style='font-family:"DejaVu Sans", sans-serif' >أُصَلِّي سُنَّةَ الظُّهْرِ رَكْعَتَيْنِ قَبْلِيَّةً لِلهِ تَعَالَى</text>
<text x="346" y="574.7" font-size="16.6" fill="#000" textLength="12.7" lengthAdjust="spacingAndGlyphs" >c.</text>
<text x="374.8" y="576.5" font-size="16.5" fill="#000" textLength="240.6" lengthAdjust="spacingAndGlyphs" style='font-family:"DejaVu Sans", sans-serif' >أُصَلِّي سُنَّةَ الْعِشَاءِ رَكْعَتَيْنِ قَبْلِيَّةً لِلهِ تَعَالَى</text>
<text x="346" y="394.6" font-size="16.6" fill="#000" textLength="14.2" lengthAdjust="spacingAndGlyphs" >d.</text>
<text x="374.8" y="396.40000000000003" font-size="16.5" fill="#000" textLength="237.6" lengthAdjust="spacingAndGlyphs" style='font-family:"DejaVu Sans", sans-serif' >أُصَلِّي سُنَّةَ الظُّهْرِ رَكْعَتَيْنِ بَعْدِيَّةً لِلهِ تَعَالَى</text>
<text x="346" y="613.3" font-size="16.6" fill="#000" textLength="14.2" lengthAdjust="spacingAndGlyphs" >d.</text>
<text x="374.8" y="615.0999999999999" font-size="16.5" fill="#000" textLength="241.6" lengthAdjust="spacingAndGlyphs" style='font-family:"DejaVu Sans", sans-serif' >أُصَلِّي سُنَّةَ الصُّبْحِ رَكْعَتَيْنِ بَعْدِيَّةً لِلهِ تَعَالَى</text>
<text x="346" y="433" font-size="16.6" fill="#000" textLength="13.8" lengthAdjust="spacingAndGlyphs" >e.</text>
<text x="374.8" y="434.8" font-size="16.5" fill="#000" textLength="240.4" lengthAdjust="spacingAndGlyphs" style='font-family:"DejaVu Sans", sans-serif' >أُصَلِّي سُنَّةَ الْعَصْرِ رَكْعَتَيْنِ بَعْدِيَّةً لِلهِ تَعَالَى</text>
<text x="346" y="652.5" font-size="16.6" fill="#000" textLength="13.8" lengthAdjust="spacingAndGlyphs" >e.</text>
<text x="374.8" y="654.3" font-size="16.5" fill="#000" textLength="244.0" lengthAdjust="spacingAndGlyphs" style='font-family:"DejaVu Sans", sans-serif' >أُصَلِّي سُنَّةَ الْعِشَاءِ رَكْعَتَيْنِ بَعْدِيَّةً لِلهِ تَعَالَى</text>
<text x="316.4" y="467.7" font-size="16.6" fill="#000" textLength="22.0" lengthAdjust="spacingAndGlyphs" >14.</text>
<text x="346" y="467.7" font-size="16.6" fill="#000" textLength="48.3" lengthAdjust="spacingAndGlyphs" >Lafadz</text>
<text x="399.3" y="467.7" font-size="16.6" fill="#000" textLength="27.0" lengthAdjust="spacingAndGlyphs" >niat</text>
<text x="431" y="467.7" font-size="16.6" fill="#000" textLength="42.1" lengthAdjust="spacingAndGlyphs" >shalat</text>
<text x="479" y="467.7" font-size="16.6" fill="#000" textLength="55" lengthAdjust="spacingAndGlyphs" >rawatib</text>
<text x="539.3" y="467.7" font-size="16.6" fill="#000" textLength="53.3" lengthAdjust="spacingAndGlyphs" >setelah</text>
<text x="599.9" y="467.7" font-size="16.6" fill="#000" textLength="33.1" lengthAdjust="spacingAndGlyphs" >Isya’</text>
<text x="639.4" y="467.7" font-size="16.6" fill="#000" textLength="59.5" lengthAdjust="spacingAndGlyphs" >adalah...</text>
<text x="316.3" y="688.7" font-size="18" fill="#000" textLength="22.1" lengthAdjust="spacingAndGlyphs" >15.</text>
<text x="345.5" y="688.7" font-size="18" fill="#000" textLength="103.5" lengthAdjust="spacingAndGlyphs" >Shalat-shalat</text>
<text x="456" y="688.7" font-size="18" fill="#000" textLength="59.7" lengthAdjust="spacingAndGlyphs" >rawatib</text>
<text x="521.6" y="688.7" font-size="18" fill="#000" textLength="37.5" lengthAdjust="spacingAndGlyphs" >yang</text>
<text x="565.4" y="688.7" font-size="18" fill="#000" textLength="90.9" lengthAdjust="spacingAndGlyphs" >disunahkan</text>
<text x="662.6" y="688.7" font-size="18" fill="#000" textLength="60.5" lengthAdjust="spacingAndGlyphs" >sebagai</text>
<text x="729.4" y="688.7" font-size="18" fill="#000" textLength="58.4" lengthAdjust="spacingAndGlyphs" >berikut,</text>
<text x="794" y="688.7" font-size="18" fill="#000" textLength="72.2" lengthAdjust="spacingAndGlyphs" >kecuali...</text>
<text x="1005.2" y="654.8" font-size="25" fill="#000" textLength="85.0" lengthAdjust="spacingAndGlyphs" fill-opacity="0.25">Activate</text>
<text x="1101.2" y="654.8" font-size="25" fill="#000" textLength="100.0" lengthAdjust="spacingAndGlyphs" fill-opacity="0.25">Windows</text>
<text x="1005.2" y="682" font-size="17.5" fill="#000" textLength="22.4" lengthAdjust="spacingAndGlyphs" fill-opacity="0.25">Go</text>
<text x="1034" y="682" font-size="17.5" fill="#000" textLength="15.2" lengthAdjust="spacingAndGlyphs" fill-opacity="0.25">to</text>
<text x="1056.2" y="682" font-size="17.5" fill="#000" textLength="19.2" lengthAdjust="spacingAndGlyphs" fill-opacity="0.25">PC</text>
<text x="1082" y="682" font-size="17.5" fill="#000" textLength="59.7" lengthAdjust="spacingAndGlyphs" fill-opacity="0.25">settings</text>
<text x="1148.7" y="682" font-size="17.5" fill="#000" textLength="15.7" lengthAdjust="spacingAndGlyphs" fill-opacity="0.25">to</text>
<text x="1170.5" y="682" font-size="17.5" fill="#000" textLength="59.1" lengthAdjust="spacingAndGlyphs" fill-opacity="0.25">activate</text>
<text x="1236.6" y="682" font-size="17.5" fill="#000" textLength="76.1" lengthAdjust="spacingAndGlyphs" fill-opacity="0.25">Windows.</text>
<rect x="0" y="693" width="1366" height="27" fill="#2B579A" />
<text x="8.3" y="711.4" font-size="13.5" fill="#fff" textLength="72.4" lengthAdjust="spacingAndGlyphs" >PAGE 2 OF 4</text>
<text x="100.7" y="711.4" font-size="13.5" fill="#fff" textLength="76.8" lengthAdjust="spacingAndGlyphs" >1152 WORDS</text>
<text x="197.5" y="711.4" font-size="13.5" fill="#fff" textLength="154.4" lengthAdjust="spacingAndGlyphs" >ENGLISH (UNITED STATES)</text>
<rect x="1069" y="693" width="41" height="27" fill="#1E4584" />
<text x="1326.4" y="711.4" font-size="13.5" fill="#fff" textLength="31.1" lengthAdjust="spacingAndGlyphs" >100%</text>
<rect x="1156" y="705.5" width="9" height="1.5" fill="#fff" />
<rect x="1169" y="705.5" width="125" height="1" fill="#fff" />
<rect x="1229" y="699.5" width="5" height="13.5" fill="#fff" />
<rect x="1298.5" y="705.5" width="11" height="1.5" fill="#fff" />
<rect x="1303.25" y="700.5" width="1.5" height="11" fill="#fff" />
<rect x="0" y="720" width="1366" height="48" fill="#C4C28A" />
<rect x="0" y="720" width="261" height="48" fill="#5F5C29" />
<rect x="1104" y="720" width="262" height="48" fill="#5F5C29" />
<text x="1221.3" y="750.9" font-size="15.5" fill="#fff" textLength="25.2" lengthAdjust="spacingAndGlyphs" >IND</text>
<text x="1291.2" y="739.9" font-size="15.5" fill="#fff" textLength="33.7" lengthAdjust="spacingAndGlyphs" >12:19</text>
<text x="1269.2" y="761.9" font-size="15.5" fill="#fff" textLength="74.7" lengthAdjust="spacingAndGlyphs" >02/03/2021</text>
<defs><filter id="bl" x="-5%" y="-20%" width="110%" height="140%"><feGaussianBlur stdDeviation="0.9"/></filter><clipPath id="tbclip"><rect x="261" y="720" width="843" height="48"/></clipPath></defs>
<g clip-path="url(#tbclip)"><g filter="url(#bl)"><path d="M434 712V742 C455 740 475 736 492 736.5 C505 737 510 737.5 517 738.5 C530 740.5 540 742.5 553 745 C565 747.5 575 750 586 751.5 C597 753 607 754 615 753 C623 752 630 751 636 749 C645 746 650 744 658 742 C668 739.5 677 738.5 685 738.5 C693 738.5 699 739 705 740.5 C711 742 714 743 719 744.5 C732 748.5 745 751 758 751.5 C770 752 780 752 790 751 C802 749.5 813 747 824 744.5 C838 741 851 738.5 864 738 C878 737.3 890 736.5 900 737.5 C912 738.5 922 741 930 743 V712Z" fill="#C9C330" stroke="#C9C330" stroke-width="27.5" stroke-linejoin="round"/><path d="M434 712V742 C455 740 475 736 492 736.5 C505 737 510 737.5 517 738.5 C530 740.5 540 742.5 553 745 C565 747.5 575 750 586 751.5 C597 753 607 754 615 753 C623 752 630 751 636 749 C645 746 650 744 658 742 C668 739.5 677 738.5 685 738.5 C693 738.5 699 739 705 740.5 C711 742 714 743 719 744.5 C732 748.5 745 751 758 751.5 C770 752 780 752 790 751 C802 749.5 813 747 824 744.5 C838 741 851 738.5 864 738 C878 737.3 890 736.5 900 737.5 C912 738.5 922 741 930 743 V712Z" fill="#659C40"/></g></g>
<rect x="135.5" y="721.5" width="63" height="45.5" fill="rgba(255,255,255,0.2)" stroke="rgba(255,255,255,0.45)"/>
<rect x="200.5" y="721.5" width="3.5" height="45.5" fill="rgba(255,255,255,0.2)" stroke="rgba(255,255,255,0.35)"/>
<rect x="281.5" y="721.5" width="68.5" height="45.5" fill="rgba(255,255,255,0.15)" stroke="rgba(255,255,255,0.45)"/>
<rect x="719.0" y="721.5" width="64" height="45.5" fill="rgba(255,255,255,0.3)" stroke="rgba(255,255,255,0.8)"/>
<rect x="784.5" y="721.5" width="4" height="45.5" fill="rgba(255,255,255,0.3)" stroke="rgba(255,255,255,0.8)"/>
<path d="M13.8 731.3L28.3 729.2V742.7H13.8Z M30 729L46.3 726.8V742.7H30Z M13.8 744.3H28.3V757.8L13.8 755.7Z M30 744.3H46.3V760.1L30 758Z" fill="#fff"/>
<defs><radialGradient id="ieg" cx="0.55" cy="0.5" r="0.6"><stop offset="0" stop-color="#9AEBFF"/><stop offset="0.6" stop-color="#4CC4F5"/><stop offset="1" stop-color="#2A9FE3"/></radialGradient></defs>
<path d="M114.1 746.9H89.6C90 752 94 754.4 98 754.4C102 754.4 104.5 752.5 106 750H113A16.8 16.8 0 1 1 114.1 744.2ZM89.6 741.6H105C104.5 737.5 101.5 734.7 97.3 734.7C93 734.7 90 737.5 89.6 741.6Z" fill="url(#ieg)" fill-rule="evenodd"/>
<path d="M113.3 733.5C116 727 110 722.8 101 727C90 732.5 77 748 77.5 756C78 761.5 84 761 88.3 759.3" fill="none" stroke="#F5BC1C" stroke-width="3.2" stroke-linecap="round"/>
<defs><linearGradient id="fog" x1="0" y1="0" x2="1" y2="1"><stop offset="0" stop-color="#FBEFB4"/><stop offset="0.5" stop-color="#F6DC80"/><stop offset="1" stop-color="#EEC04C"/></linearGradient><linearGradient id="stg" x1="0" y1="0" x2="0" y2="1"><stop offset="0" stop-color="#C6EAF8"/><stop offset="0.45" stop-color="#7CC6EA"/><stop offset="1" stop-color="#3A9AD9"/></linearGradient></defs>
<path d="M150 732V726.3Q150 725 151.3 725H164.5Q166 725 166.5 726.5L167.5 728H174Q175.5 728 176 729.2L176.8 730.3H185Q186.8 730.3 186.8 732V734H150Z" fill="#F4D676" stroke="#E0BC55" stroke-width="0.6"/>
<rect x="152.5" y="726.3" width="7.5" height="2.6" fill="#FDFBEF" />
<rect x="161.5" y="728.6" width="7.5" height="2.4" fill="#FDFBEF" />
<rect x="172.5" y="730.8" width="9.5" height="2.2" fill="#FDFBEF" />
<rect x="152.7" y="726.5" width="1.6" height="2.2" fill="#2E9E3E" />
<rect x="161.8" y="728.8" width="1.6" height="2" fill="#D43A2F" />
<rect x="172.8" y="731" width="1.6" height="1.8" fill="#2F6FD4" />
<rect x="148" y="732.3" width="38.9" height="27.7" rx="1" fill="url(#fog)"/>
<path d="M152 762.6V750Q152 747.2 154.8 747.2H179.5Q182.3 747.2 182.3 750V762.6H173.6V756.4H160.7V762.6Z" fill="url(#stg)"/>
<rect x="223" y="725" width="38" height="38" fill="#008A00" />
<path d="M228 738.5L255 734.4V758.5L228 754.4Z" fill="#fff"/>
<path d="M232.2 738.5C232.5 731 237 728.5 240 730C242.5 731.2 243.6 733.5 243.8 736.8" fill="none" stroke="#fff" stroke-width="1.5"/>
<path d="M236.5 737.5C237 733 238 730.5 240 729.8M241.5 729.5C244.5 730 246 732.5 246.3 736" fill="none" stroke="#fff" stroke-width="0.9"/>
<path d="M231.5 742.2L237.3 741.3V746.3L231.5 746.5ZM238.5 741.1L245.3 740V746.1L238.5 746.3ZM231.5 747.7L237.3 747.6V752.3L231.5 751.5ZM238.5 747.5L245.3 747.4V753.5L238.5 752.5Z" fill="#008A00"/>
<circle cx="314.8" cy="743.6" r="17.599999999999998" fill="#fff"/>
<path d="M314.8 735.4L330.71 735.4A17.9 17.9 0 0 0 299.30 734.65L307.70 747.70A8.2 8.2 0 0 1 314.8 735.4Z" fill="#DD4B3E"/><path d="M314.8 735.4L330.71 735.4A17.9 17.9 0 0 0 299.30 734.65L307.70 747.70A8.2 8.2 0 0 1 314.8 735.4Z" fill="#1EA362" transform="rotate(-120 314.8 743.6)"/><path d="M314.8 735.4L330.71 735.4A17.9 17.9 0 0 0 299.30 734.65L307.70 747.70A8.2 8.2 0 0 1 314.8 735.4Z" fill="#FFCD40" transform="rotate(120 314.8 743.6)"/>
<circle cx="314.8" cy="743.6" r="8.2" fill="#fff"/><circle cx="314.8" cy="743.6" r="6.6" fill="#4A8AF4"/>
<circle cx="325.1" cy="753.8" r="9.7" fill="#4A443C"/><path d="M316.5 758Q320 754 325 755.5Q331 754 333.8 758Q331 763.5 325.1 763.5Q319 763.5 316.5 758Z" fill="#EDE9DF"/><ellipse cx="323.3" cy="750" rx="3.3" ry="4" fill="#8E5F3E"/><path d="M319.8 748.5Q320 744.5 323.5 744.5Q327 744.5 326.8 748.5Q323.5 746.5 319.8 748.5Z" fill="#1E1712"/>
<defs><linearGradient id="ffg" x1="0.85" y1="0.05" x2="0.25" y2="1"><stop offset="0" stop-color="#FFE94A"/><stop offset="0.35" stop-color="#FF9A1F"/><stop offset="0.7" stop-color="#FF4A3A"/><stop offset="1" stop-color="#E81B8E"/></linearGradient><radialGradient id="ffp" cx="0.6" cy="0.3" r="0.8"><stop offset="0" stop-color="#B24FE0"/><stop offset="1" stop-color="#5B3FD0"/></radialGradient></defs>
<path d="M391 724.2C395.5 726.5 398.5 730 399.5 733C400.5 732 401 731 401.2 730C405 734.5 406.5 740 406 746C405.3 755.5 397.5 762 388 762C377.5 762 369.5 754.5 369.3 745C369.2 739.5 371.5 734.5 375.3 730.3C375.2 732.5 375.6 734 376.5 735.3C377.5 733 379 731.8 381 730.8C380.6 732.5 381 734 382 735.5C384 733.5 387 732.5 389.5 732C388.5 729.5 389.5 726.5 391 724.2Z" fill="url(#ffg)"/>
<circle cx="388.5" cy="743.5" r="8" fill="url(#ffp)"/>
<path d="M374.5 739.5C378 737.5 383 737.8 386.5 740.2C388.5 741.5 390.5 741 392.5 740C391.5 743.5 388 745 384.5 744.3C381.5 746.5 380.5 749.5 381.8 752.5C378 750 376.5 745 377.8 741.8C376.8 741 375.5 740.3 374.5 739.5Z" fill="#FFA526"/>
<path d="M445.5 729.3Q444 729.3 444 731V756Q444 758 445.8 757L467 744.5Q468.5 743.5 467 742.5Z" fill="#5F28CB"/>
<path d="M476.5 729.6Q478 729 478 731V756Q478 758 476.3 757L462 748.5L467.5 745Q469.5 743.5 467.5 742L462 738.5Z" fill="#D2C3F4"/>
<circle cx="533.6" cy="743.4" r="17.4" fill="#111" stroke="#E3262B" stroke-width="1.7"/>
<g fill="#E8262B"><circle cx="530.7" cy="744.1" r="6.4"/><rect x="529.2" y="735.6" width="3" height="4" rx="0.6" transform="rotate(0 530.7 744.1)"/><rect x="529.2" y="735.6" width="3" height="4" rx="0.6" transform="rotate(45 530.7 744.1)"/><rect x="529.2" y="735.6" width="3" height="4" rx="0.6" transform="rotate(90 530.7 744.1)"/><rect x="529.2" y="735.6" width="3" height="4" rx="0.6" transform="rotate(135 530.7 744.1)"/><rect x="529.2" y="735.6" width="3" height="4" rx="0.6" transform="rotate(180 530.7 744.1)"/><rect x="529.2" y="735.6" width="3" height="4" rx="0.6" transform="rotate(225 530.7 744.1)"/><rect x="529.2" y="735.6" width="3" height="4" rx="0.6" transform="rotate(270 530.7 744.1)"/><rect x="529.2" y="735.6" width="3" height="4" rx="0.6" transform="rotate(315 530.7 744.1)"/></g>
<circle cx="530.9" cy="744.1" r="3.6" fill="#111"/><circle cx="531.6" cy="744.1" r="1.7" fill="#E8262B"/>
<path d="M533.5 755.3C539.5 752.5 542.5 748 542.8 743.8H547.2L541.9 735.2L536.7 743.8H539.3C539.2 747 537 751 532 753.2Z" fill="#E8262B" stroke="#111" stroke-width="1.1"/>
<rect x="593" y="731.8" width="27.4" height="27.2" rx="1.5" fill="#7DBBDC"/><rect x="591" y="731" width="27.4" height="28.6" rx="1.5" fill="#9FD0E8"/><rect x="588.7" y="730.2" width="27.6" height="30.3" rx="1.5" fill="#B4DDF0" stroke="#7FBEDD" stroke-width="0.8"/>
<defs><linearGradient id="mpo" x1="0" y1="0" x2="0" y2="1"><stop offset="0" stop-color="#FBA12B"/><stop offset="1" stop-color="#EE7A1B"/></linearGradient></defs>
<circle cx="601.5" cy="745.1" r="10.6" fill="url(#mpo)"/><path d="M596.3 737.6L609.2 745.1L596.3 752.7Z" fill="#fff"/>
<path d="M680 725A19 18.5 0 1 0 680 762A19 18.5 0 1 0 680 725ZM680 729.5C686 729.5 689.5 736 689.5 743.5C689.5 751 686 757.5 680 757.5C674 757.5 670.5 751 670.5 743.5C670.5 736 674 729.5 680 729.5Z" fill="#E8192C" fill-rule="evenodd"/>
<path d="M688 727C697 732 700 748 693 757C689 761 684 762 680 762C690 757 693 735 684 727.3Z" fill="#B8101E" opacity="0.6"/>
<path d="M751 729.5H768V758.5H751" fill="#fff" stroke="#2B579A" stroke-width="1.2"/>
<rect x="754" y="733.2" width="11.5" height="1.8" fill="#2B579A" />
<rect x="754" y="737.2" width="11.5" height="1.8" fill="#2B579A" />
<rect x="754" y="741.2" width="11.5" height="1.8" fill="#2B579A" />
<rect x="754" y="745.2" width="11.5" height="1.8" fill="#2B579A" />
<rect x="754" y="749.2" width="11.5" height="1.8" fill="#2B579A" />
<rect x="754" y="753.2" width="11.5" height="1.8" fill="#2B579A" />
<path d="M733 730L752.5 726V762L733 757.5Z" fill="#2B579A"/>
<path d="M736 737.5L738.8 751H741.4L743.2 742L745 751H747.6L750.4 737.5H748L746.3 746.8L744.4 737.5H742L740.1 746.8L738.4 737.5Z" fill="#fff"/>
<path d="M1065.5 748L1070.3 742L1075.2 748Z" fill="#fff" stroke="#A8A8A8" stroke-width="0.8"/>
<path d="M1095.5 740H1099L1104.5 735V754.5L1099 749.5H1095.5Z" fill="#fff" stroke="#9A9A9A" stroke-width="0.8"/>
<path d="M1109 740.5Q1111.5 744.8 1109 749" fill="none" stroke="#fff" stroke-width="1.3"/>
<rect x="1124.8" y="749.9" width="2.2" height="3" fill="#fff" />
<rect x="1127.75" y="747.0" width="2.2" height="5.9" fill="#fff" />
<rect x="1130.7" y="743.8" width="2.2" height="9.1" fill="#fff" />
<rect x="1133.65" y="740.7" width="2.2" height="12.2" fill="#fff" />
<rect x="1136.6" y="737.7" width="2.2" height="15.2" fill="#fff" />
<rect x="1155" y="736" width="1.6" height="18.5" fill="#fff" />
<path d="M1157 737Q1161 735 1165 737.5T1172.5 738V746Q1169 748 1165 746T1157 746Z" fill="#fff"/>
<circle cx="1167.5" cy="749.8" r="5" fill="#E0242A" stroke="#fff" stroke-width="0.8"/><path d="M1165.3 747.6L1169.7 752M1169.7 747.6L1165.3 752" stroke="#fff" stroke-width="1.4"/>
<path d="M1185 735.5V740M1189 735.5V740M1184.3 740H1189.7V743.5Q1189.7 745.5 1187.8 745.5V754H1186.2V745.5Q1184.3 745.5 1184.3 743.5Z" fill="#fff" stroke="#fff" stroke-width="1"/>
<rect x="1192.7" y="737.5" width="9.6" height="16.2" rx="1" fill="none" stroke="#fff" stroke-width="1.4"/>
<rect x="1195.2" y="735.8" width="4.6" height="1.8" fill="#fff" />
<rect x="1194.5" y="739.3" width="6" height="12.6" fill="#fff" />
<path d="M1047.2 700.5H1041.5V709.5H1047.2M1048.2 700.5H1054V709.5H1048.2" fill="none" stroke="#fff" stroke-width="1"/>
<rect x="1047.2" y="699" width="1" height="11.5" fill="#fff" />
<path d="M1045.9 710.3H1049.5L1047.7 712.6Z" fill="#fff"/>
<rect x="1043" y="702" width="3" height="1" fill="#fff" />
<rect x="1050" y="702" width="3" height="1" fill="#fff" />
<rect x="1043" y="704" width="3" height="1" fill="#fff" />
<rect x="1050" y="704" width="3" height="1" fill="#fff" />
<rect x="1043" y="706" width="3" height="1" fill="#fff" />
<rect x="1050" y="706" width="3" height="1" fill="#fff" />
<rect x="1043" y="708" width="3" height="1" fill="#fff" />
<rect x="1050" y="708" width="3" height="1" fill="#fff" />
<rect x="1082.5" y="699.5" width="13" height="12" fill="none" stroke="#fff" stroke-width="1.2"/>
<rect x="1085" y="702" width="8" height="1" fill="#fff" />
<rect x="1085" y="704" width="8" height="1" fill="#fff" />
<rect x="1085" y="706" width="8" height="1" fill="#fff" />
<rect x="1085" y="708" width="8" height="1" fill="#fff" />
<path d="M1130 709.5H1123.5V699.5H1135.5V702.5" fill="none" stroke="#fff" stroke-width="1.1"/>
<rect x="1125" y="702" width="8" height="1" fill="#fff" />
<rect x="1125" y="704" width="5" height="1" fill="#fff" />
<rect x="1125" y="706" width="4" height="1" fill="#fff" />
<circle cx="1133.3" cy="707.8" r="4" fill="#fff"/><path d="M1131 705.5Q1133.5 706.5 1132.5 708.5Q1131.5 710 1130.3 709Q1129.8 707 1131 705.5ZM1134.5 705.2Q1136.5 706.5 1136 709.5Q1134.2 708.5 1134.5 705.2Z" fill="#2B579A"/>
</svg>
</div></body></html>
